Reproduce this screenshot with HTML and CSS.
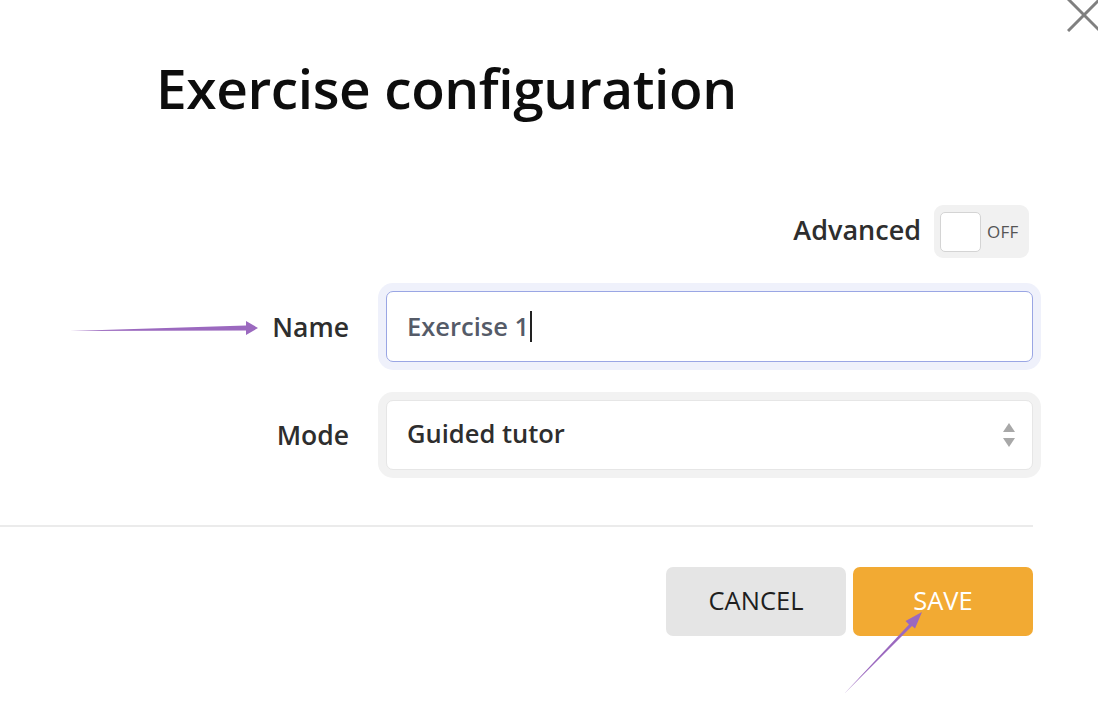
FILE: index.html
```html
<!DOCTYPE html>
<html lang="en">
<head>
<meta charset="utf-8">
<title>Exercise configuration</title>
<link rel="stylesheet" href="styles.css">
</head>
<body>
<div class="dialog">
  <button class="close" aria-label="Close">
    <svg width="34" height="34" viewBox="0 0 34 34"><path d="M1 1 L33 33 M33 1 L1 33" stroke="#808080" stroke-width="3" fill="none"/></svg>
  </button>
  <h1 class="title">Exercise configuration</h1>

  <div class="advanced-row">
    <span class="advanced-label">Advanced</span>
    <div class="toggle">
      <span class="knob"></span>
      <span class="toggle-text">OFF</span>
    </div>
  </div>

  <div class="form">
    <label class="label">Name</label>
    <div class="field field-focus">
      <span class="value value-input">Exercise 1</span><span class="caret"></span>
    </div>
    <label class="label">Mode</label>
    <div class="field field-select">
      <span class="value">Guided tutor</span>
      <span class="arrows">
        <svg width="14" height="26" viewBox="0 0 14 26"><path d="M7 1 L13 10 L1 10 Z" fill="#a8a8a8"/><path d="M1 16 L13 16 L7 25 Z" fill="#a8a8a8"/></svg>
      </span>
    </div>
  </div>

  <hr class="divider">

  <div class="actions">
    <button class="btn btn-cancel">CANCEL</button>
    <button class="btn btn-save">SAVE</button>
  </div>

  <svg class="annot annot-name" width="200" height="20" viewBox="0 0 200 20">
    <path d="M0 11 L176 5.5 L176 1 L188 8 L176 15 L176 10.5 Z" fill="#9b69bf"/>
  </svg>
  <svg class="annot annot-save" width="90" height="90" viewBox="0 0 90 90">
    <path d="M2 88 L67 18.5 L63.5 15 L80 6 L73 22.5 L70 20 Z" fill="#9b69bf"/>
  </svg>
</div>
</body>
</html>
```

FILE: styles.css
```css
html, body {
  margin: 0;
  padding: 0;
  background: #ffffff;
}
body {
  font-family: "Open Sans", "Noto Sans", sans-serif;
  color: #2b2b2b;
}
.dialog {
  position: relative;
  width: 1098px;
  height: 710px;
  box-sizing: border-box;
  padding: 0 65px 0 0;
  overflow: hidden;
}
.close {
  position: absolute;
  top: -2px;
  right: -3px;
  width: 34px;
  height: 34px;
  padding: 0;
  border: 0;
  background: none;
}
.close svg { display: block; }
.title {
  margin: 0;
  padding: 52px 0 0 156px;
  font-size: 55px;
  font-weight: 600;
  line-height: 72px;
  color: #0d0d0d;
  letter-spacing: -0.4px;
}
.advanced-row {
  display: flex;
  justify-content: flex-end;
  align-items: center;
  gap: 13px;
  margin-top: 81px;
  padding-right: 4px;
}
.advanced-label {
  font-size: 27px;
  font-weight: 600;
  color: #2e2e2e;
  position: relative;
  top: -2px;
}
.toggle {
  display: flex;
  align-items: center;
  gap: 6px;
  width: 95px;
  height: 53px;
  box-sizing: border-box;
  padding: 0 8px 0 6px;
  background: #f1f1f1;
  border-radius: 9px;
}
.knob {
  width: 41px;
  height: 40px;
  box-sizing: border-box;
  background: #fff;
  border: 1.5px solid #d4d4d4;
  border-radius: 5px;
}
.toggle-text {
  font-size: 17px;
  font-weight: 500;
  color: #555;
  letter-spacing: 0.2px;
}
.form {
  display: grid;
  grid-template-columns: 349px 1fr;
  column-gap: 37px;
  row-gap: 38px;
  align-items: center;
  margin-top: 33px;
}
.label {
  text-align: right;
  font-size: 26.5px;
  font-weight: 600;
  color: #2e2e2e;
}
.field {
  display: flex;
  align-items: center;
  height: 71px;
  box-sizing: border-box;
  padding: 0 20px 0 20px;
  background: #fff;
  border-radius: 7px;
}
.field-focus {
  border: 1.5px solid #9aa6e4;
  box-shadow: 0 0 0 8px #eff1fb;
}
.field-select {
  height: 70px;
  border: 1.5px solid #e6e6e6;
  box-shadow: 0 0 0 8px #f2f2f2;
}
.value {
  font-size: 25.5px;
  font-weight: 600;
  color: #2e2e2e;
  position: relative;
  top: -2px;
}
.value-input {
  color: #555b68;
  top: -1px;
}
.caret {
  display: inline-block;
  width: 1.5px;
  height: 31px;
  margin-left: 1px;
  background: #222;
}
.arrows {
  margin-left: auto;
  display: flex;
  margin-right: -4px;
}
.arrows svg { display: block; }
.divider {
  margin: 55px 0 0 0;
  height: 0;
  border: 0;
  border-top: 2px solid #ebebeb;
}
.actions {
  display: flex;
  justify-content: flex-end;
  gap: 7px;
  margin-top: 40px;
}
.btn {
  width: 180px;
  height: 69px;
  border: 0;
  border-radius: 7px;
  font-family: "Open Sans", "Noto Sans", sans-serif;
  font-size: 25.5px;
  font-weight: 400;
  padding: 0 0 3px 0;
}
.btn-cancel {
  background: #e5e5e5;
  color: #1e1e1e;
}
.btn-save {
  background: #f2aa33;
  color: #ffffff;
}
.annot {
  position: absolute;
}
.annot-name {
  left: 70px;
  top: 320px;
}
.annot-save {
  left: 842px;
  top: 606px;
}
```
